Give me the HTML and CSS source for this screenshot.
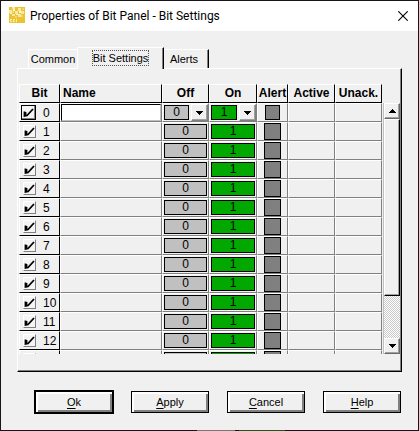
FILE: index.html
```
<!DOCTYPE html>
<html lang="en">
<head>
<meta charset="utf-8">
<title>Properties of Bit Panel - Bit Settings</title>
<link rel="stylesheet" href="styles.css">
</head>
<body>
<main class="window">
  <header class="titlebar">
    <svg class="logo" width="16" height="16" viewBox="0 0 16 16" shape-rendering="crispEdges">
      <path fill="#ecc32e" d="M0 0h16v16H0z"/>
      <path fill="#f8e9a8" d="M3 0h3v2H3zM9 1h3v3H9zM0 3h3v3H0zM6 4h3v3H6zM12 4h3v3h-3zM3 7h3v2H3zM9 7h3v3H9z"/>
      <path fill="#fff6d0" d="M4 2h2v2H4zM10 4h2v2h-2zM7 7h2v1H7zM1 6h2v1H1z"/>
      <path fill="#f3d76c" d="M13 1h2v2h-2zM3 4h2v2H3zM12 8h2v2h-2zM6 9h2v2H6z"/>
      <path fill="#f9edb8" d="M1 12h2v1H1zM1 13h1v1H1zM1 14h2v1H1zM4 12h2v1H4zM4 13h1v1H4zM4 14h2v1H4zM7 12h1v3H7z"/>
    </svg>
    <h1 class="title">Properties of Bit Panel - Bit Settings</h1>
    <button class="close" type="button" aria-label="Close">
      <svg width="10" height="10" viewBox="0 0 10 10"><path d="M.3.3l9.4 9.4M9.7.3L.3 9.7" stroke="#000" stroke-width="1.1"/></svg>
    </button>
  </header>
  <div class="content">
    <div class="tabs" role="tablist">
      <button class="tab" type="button" role="tab">Common</button>
      <button class="tab active" type="button" role="tab" aria-selected="true"><span class="focus">Bit Settings</span></button>
      <button class="tab last" type="button" role="tab">Alerts</button>
    </div>
    <section class="panel">
      <div class="grid">
        <table class="bits">
          <colgroup><col class="c-bit"><col class="c-name"><col class="c-val"><col class="c-on"><col class="c-alert"><col class="c-flag"><col class="c-flag"></colgroup>
          <thead>
            <tr><th>Bit</th><th class="left">Name</th><th>Off</th><th>On</th><th>Alert</th><th>Active</th><th>Unack.</th></tr>
          </thead>
          <tbody id="rows"></tbody>
        </table>
        <div class="scroll">
          <button class="sbtn" type="button" aria-label="Scroll up"><svg width="7" height="4" viewBox="0 0 7 4" shape-rendering="crispEdges"><path d="M3 0h1v1h1v1h1v1h1v1H0V3h1V2h1V1h1z"/></svg></button>
          <div class="track"><div class="thumb"></div></div>
          <button class="sbtn" type="button" aria-label="Scroll down"><svg width="7" height="4" viewBox="0 0 7 4" shape-rendering="crispEdges"><path d="M0 0h7v1H6v1H5v1H4v1H3V3H2V2H1V1H0z"/></svg></button>
        </div>
      </div>
    </section>
    <footer class="actions">
      <button class="btn default" type="button"><u>O</u>k</button>
      <button class="btn" type="button"><u>A</u>pply</button>
      <button class="btn" type="button"><u>C</u>ancel</button>
      <button class="btn" type="button"><u>H</u>elp</button>
    </footer>
  </div>
</main>
<script src="rows.js"></script>
</body>
</html>
```
FILE: rows.js
```
const arrow = '<span class="drop"><svg width="7" height="4" viewBox="0 0 7 4" shape-rendering="crispEdges"><path d="M0 0h7v1H6v1H5v1H4v1H3V3H2V2H1V1H0z"/></svg></span>';

function value(kind, text, editing) {
  if (!editing) return `<div class="value ${kind}">${text}</div>`;
  return `<label class="combo"><select class="value ${kind}" aria-label="${kind} value"><option>${text}</option></select>${arrow}</label>`;
}

// The row after the last labelled one only peeks in at the bottom edge.
const labelled = 13;
let html = '';
for (let bit = 0; bit <= labelled; bit++) {
  const editing = bit === 0;
  const peek = bit === labelled;
  html += `<tr class="${editing ? 'current' : ''}">
    <td class="bit"><label class="bitlabel"><input class="check" type="checkbox" checked><span>${peek ? '' : bit}</span></label></td>
    <td>${editing ? '<input class="name" type="text" aria-label="Name">' : ''}</td>
    <td>${value('off', peek ? '' : '0', editing)}</td>
    <td>${value('on', peek ? '' : '1', editing)}</td>
    <td><div class="alert"></div></td>
    <td></td><td></td>
  </tr>`;
}
document.getElementById('rows').innerHTML = html;
```
FILE: styles.css
```
* { box-sizing: border-box; }

body {
  margin: 0;
  padding: 1px;
  background: linear-gradient(90deg, #17151a 47%, #777 47% 56%, #17151a 56% 57%, #1c5a1c 57% 68%, #17151a 68%) bottom / 100% 1px no-repeat #17151a;
  color: #000;
  font: 11px/14px "Liberation Sans", sans-serif;
}

button, input, select { font: inherit; color: inherit; border-radius: 0; }

.window {
  min-height: calc(100vh - 2px);
  background: #f0f0f0;
}

.titlebar {
  display: flex;
  align-items: center;
  height: 30px;
  padding: 0 10px 0 8px;
  background: #fff;
}

.logo { flex: none; margin-bottom: 2px; }

.title {
  flex: 1;
  margin: 0 0 0 5px;
  font: 12px/16px Roboto, sans-serif;
  white-space: nowrap;
}

.close {
  display: flex;
  padding: 0;
  border: 0;
  background: none;
}

.content { padding: 16px 16px 0; }

.tabs {
  display: flex;
  align-items: flex-end;
  height: 21px;
  padding-left: 11px;
}

.tab {
  height: 19px;
  width: 49px;
  padding: 0;
  border: 0;
  border-top: 1px solid #fff;
  border-left: 1px solid #fff;
  background: #f0f0f0;
}

.tab.active {
  position: relative;
  z-index: 1;
  width: 87px;
  height: 22px;
  margin-bottom: -1px;
  padding-bottom: 1px;
  border-right: 1px solid #000;
  box-shadow: inset -1px 0 #808080;
}

.focus { outline: 1px dotted #555; padding: 1px 0; }

.tab.last {
  width: 45px;
  padding-right: 4px;
  border-left: 0;
  border-right: 1px solid #000;
  box-shadow: inset -1px 0 #808080;
}

.panel {
  padding: 15px 1px 17px;
  border: 1px solid;
  border-color: #fff #000 #000 #fff;
  box-shadow: inset -1px -1px #808080;
}

.grid {
  display: flex;
  height: 270px;
  overflow: hidden;
}

.bits {
  flex: 1;
  table-layout: fixed;
  height: max-content;
  border-collapse: separate;
  border-spacing: 0;
}

.c-bit { width: 41px; }
.c-val { width: 47px; }
.c-on { width: 48px; }
.c-alert { width: 31px; }
.c-flag { width: 47px; }

.bits th {
  height: 19px;
  padding: 0;
  border: 1px solid;
  border-color: #fff #000 #000 #fff;
  font: bold 12px/17px "Liberation Sans", sans-serif;
}

.bits th.left { padding-left: 2px; text-align: left; }

.bits td {
  height: 19px;
  padding: 0;
  border-left: 1px solid #fff;
  border-top: 1px solid #fff;
  border-bottom: 1px solid #808080;
  border-right: 1px solid #808080;
  vertical-align: top;
}

.bits td.bit {
  border-right-color: #000;
  border-bottom-color: #000;
  font-size: 12px;
}

.bitlabel {
  display: flex;
  align-items: center;
  gap: 7px;
  height: 17px;
  padding-left: 2px;
}

.check {
  appearance: none;
  flex: none;
  width: 13px;
  height: 13px;
  margin: 0 0 0 1px;
  border: 1px solid;
  border-color: #fff #808080 #808080 #fff;
  background: #f4f4f4 url("data:image/svg+xml,%3Csvg xmlns='http://www.w3.org/2000/svg' viewBox='0 0 11 11'%3E%3Cpath d='M1.500 4.500v4.500L4 8.500L10 2M2.500 5v3.500' fill='none' stroke='%23000' stroke-width='1.8'/%3E%3C/svg%3E") center / 11px 11px no-repeat;
}

.current .check {
  width: 15px;
  height: 15px;
  margin: 0;
  border-color: #000;
  box-shadow: inset -1px -1px #808080;
}

.current .bitlabel { padding-left: 1px; }

.name {
  display: block;
  width: 100%;
  height: 17px;
  padding: 0 2px;
  border: 1px solid;
  border-color: #000 #c0c0c0 #c0c0c0 #000;
  background: #fff;
  outline: 0;
}

.value {
  display: block;
  height: 15px;
  margin: 1px;
  border: 1px solid #000;
  font-size: 12px;
  line-height: 13px;
  text-align: center;
}

.off { background: #c0c0c0; }
.on { background: #00a800; }

.combo { display: flex; height: 17px; }

select.value {
  appearance: none;
  flex: 1;
  min-width: 0;
  margin-right: 2px;
  padding: 0;
  text-align-last: center;
}

.drop {
  display: flex;
  align-items: center;
  justify-content: center;
  width: 17px;
  height: 17px;
  border: 1px solid;
  border-color: #fff #808080 #808080 #fff;
  box-shadow: inset -1px -1px #a0a0a0;
}

.alert {
  width: 17px;
  height: 17px;
  margin: 0 auto;
  border: 1px solid #000;
  background: #808080;
}

.current .alert { width: 15px; height: 15px; margin-top: 1px; }

.scroll {
  display: flex;
  flex-direction: column;
  width: 17px;
  margin: 19px 0 0 1px;
  border-left: 1px solid #c0c0c0;
}

.sbtn {
  display: flex;
  align-items: center;
  justify-content: center;
  height: 16px;
  padding: 0;
}

.sbtn, .thumb {
  border: 1px solid;
  border-color: #fff #696969 #696969 #fff;
  background: #f0f0f0;
  box-shadow: inset -1px -1px #a0a0a0;
}

.track {
  flex: 1;
  background: repeating-conic-gradient(#c8c8c8 0 25%, #fff 0 50%) 0 0 / 2px 2px;
}

.thumb { height: 81%; border-right-color: #000; border-bottom-color: #000; }

.actions {
  display: flex;
  justify-content: space-between;
  padding: 19px 1px 0 18px;
}

.btn {
  width: 78px;
  height: 22px;
  padding: 0;
  border: 1px solid #000;
  background: #f0f0f0;
  box-shadow: inset 2px 2px #fff, inset -2px -2px #808080;
}

.btn.default { outline: 1px solid #000; }

u { text-underline-offset: 2px; }
```
